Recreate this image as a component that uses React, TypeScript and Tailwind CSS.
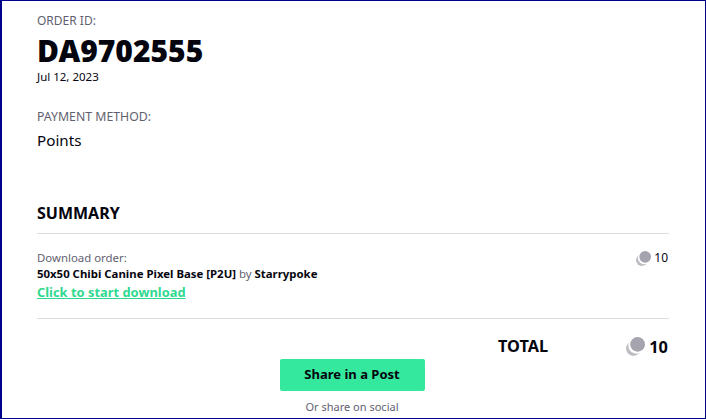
const font = "font-['Noto_Sans','Open_Sans',sans-serif]";

function Coin({ big }: { big?: boolean }) {
  return (
    <svg
      viewBox="0 0 18 18"
      className={big ? "w-[19px] h-[19px]" : "w-[15px] h-[15px] mt-[1px]"}
    >
      <circle cx="7" cy="11" r="7" fill="#bdbdc4" />
      <circle cx="10" cy="8" r="7.8" fill="#ffffff" />
      <circle cx="11" cy="7" r="7" fill="#a4a3ae" />
    </svg>
  );
}

export default function App() {
  return (
    <div
      className={`${font} w-[706px] h-[419px] overflow-hidden bg-white border border-l-2 border-[#00008b] text-[#05050f]`}
    >
      <div className="w-[632px] ml-[35px]">
        <div className="pt-[12px] text-[12px] leading-[16px] text-[#5f6170]">
          ORDER ID:
        </div>
        <h1 className="mt-[4px] text-[30px] leading-[36px] font-black">
          DA9702555
        </h1>
        <div className="text-[11.5px] leading-[14px] mt-[1px]">Jul 12, 2023</div>

        <div className="mt-[25px] text-[12.3px] leading-[16px] text-[#5f6170]">
          PAYMENT METHOD:
        </div>
        <div className="mt-[5px] text-[15.2px] leading-[20px]">Points</div>

        <h2 className="mt-[53px] text-[16px] leading-[20px] font-bold">SUMMARY</h2>
        <div className="mt-[10px] border-t border-[#dcdce2]" />

        <div className="flex justify-between mt-[16px] pb-[17px] border-b border-[#dcdce2]">
          <div>
            <div className="text-[11.4px] leading-[15px] text-[#5f6170]">
              Download order:
            </div>
            <div className="mt-[1px] text-[11.4px] leading-[16px] font-bold">
              50x50 Chibi Canine Pixel Base [P2U]{" "}
              <span className="font-normal text-[#5f6170]">by</span> Starrypoke
            </div>
            <a className="block w-fit mt-[2px] text-[12.9px] leading-[17px] font-bold text-[#2fd98f] underline">
              Click to start download
            </a>
          </div>
          <div className="flex items-start gap-[3px] pr-[1px] text-[12px] leading-[16px]">
            <Coin />
            <span>10</span>
          </div>
        </div>

        <div className="flex mt-[18px] pr-[1px] text-[16.3px] leading-[18px] font-bold">
          <span className="ml-[461px]">TOTAL</span>
          <span className="ml-auto flex items-center gap-[4px] text-[16.4px]">
            <Coin big />
            10
          </span>
        </div>

        <div className="flex flex-col items-center mr-[2px]">
          <button className="mt-[3px] w-[145px] h-[32px] rounded-[2px] bg-[#34e89e] text-[13px] font-bold text-[#05050f]">
            Share in a Post
          </button>
          <div className="mt-[9px] text-[11px] leading-[14px] text-[#5f6170]">
            Or share on social
          </div>
        </div>
      </div>
    </div>
  );
}
